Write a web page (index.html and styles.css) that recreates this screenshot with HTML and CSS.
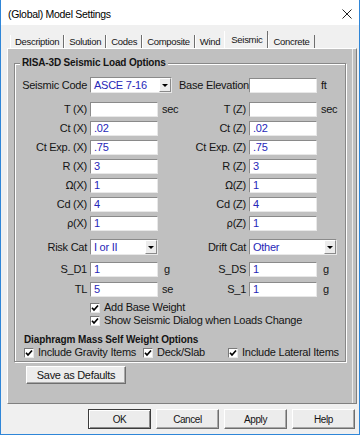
FILE: index.html
```html
<!DOCTYPE html>
<html lang="en">
<head>
    <meta charset="UTF-8">
    <title>(Global) Model Settings</title>
    <link rel="stylesheet" href="styles.css">
</head>
<body>
    <div class="window">
        <div class="titlebar">
            <span class="title">(Global) Model Settings</span>
            <svg class="close" width="10" height="10" viewBox="0 0 10 10">
                <path d="M0.5 0.5 L9.5 9.5 M9.5 0.5 L0.5 9.5" stroke="#222" stroke-width="1" fill="none"/>
            </svg>
        </div>

        <!-- tabs -->
        <div class="tabs">
            <span class="tab">Description</span>
            <span class="tab">Solution</span>
            <span class="tab">Codes</span>
            <span class="tab">Composite</span>
            <span class="tab">Wind</span>
            <span class="tab active">Seismic</span>
            <span class="tab">Concrete</span>
        </div>

        <div class="panel">
            <div class="group">
                <span class="group-title">RISA-3D Seismic Load Options</span>

                <div class="row row-code">
                    <span class="lbl">Seismic Code</span>
                    <div class="combo combo-code"><span class="val">ASCE 7-16</span><span class="arrow"></span></div>
                    <span class="lbl lbl-r">Base Elevation</span>
                    <div class="field"></div>
                    <span class="unit">ft</span>
                </div>

                <div class="row row-first">
                    <span class="lbl">T (X)</span>
                    <div class="field"></div>
                    <span class="unit">sec</span>
                    <span class="lbl">T (Z)</span>
                    <div class="field"></div>
                    <span class="unit">sec</span>
                </div>
                <div class="row">
                    <span class="lbl">Ct (X)</span>
                    <div class="field">.02</div>
                    <span class="unit"></span>
                    <span class="lbl">Ct (Z)</span>
                    <div class="field">.02</div>
                </div>
                <div class="row">
                    <span class="lbl">Ct Exp. (X)</span>
                    <div class="field">.75</div>
                    <span class="unit"></span>
                    <span class="lbl">Ct Exp. (Z)</span>
                    <div class="field">.75</div>
                </div>
                <div class="row">
                    <span class="lbl">R (X)</span>
                    <div class="field">3</div>
                    <span class="unit"></span>
                    <span class="lbl">R (Z)</span>
                    <div class="field">3</div>
                </div>
                <div class="row">
                    <span class="lbl"><span class="sym">Ω</span>(X)</span>
                    <div class="field">1</div>
                    <span class="unit"></span>
                    <span class="lbl"><span class="sym">Ω</span>(Z)</span>
                    <div class="field">1</div>
                </div>
                <div class="row">
                    <span class="lbl">Cd (X)</span>
                    <div class="field">4</div>
                    <span class="unit"></span>
                    <span class="lbl">Cd (Z)</span>
                    <div class="field">4</div>
                </div>
                <div class="row">
                    <span class="lbl"><span class="sym">ρ</span>(X)</span>
                    <div class="field">1</div>
                    <span class="unit"></span>
                    <span class="lbl"><span class="sym">ρ</span>(Z)</span>
                    <div class="field">1</div>
                </div>

                <div class="row row-cat">
                    <span class="lbl">Risk Cat</span>
                    <div class="combo"><span class="val">I or II</span><span class="arrow"></span></div>
                    <span class="unit"></span>
                    <span class="lbl">Drift Cat</span>
                    <div class="combo combo-drift"><span class="val">Other</span><span class="arrow"></span></div>
                </div>

                <div class="row row-sd1">
                    <span class="lbl">S_D1</span>
                    <div class="field">1</div>
                    <span class="unit unit-g">g</span>
                    <span class="lbl">S_DS</span>
                    <div class="field">1</div>
                    <span class="unit unit-g">g</span>
                </div>
                <div class="row row-tl">
                    <span class="lbl">TL</span>
                    <div class="field">5</div>
                    <span class="unit">se</span>
                    <span class="lbl">S_1</span>
                    <div class="field">1</div>
                    <span class="unit unit-g">g</span>
                </div>

                <div class="row row-check row-base">
                    <label class="check">
                        <span class="box"><svg width="8" height="8" viewBox="0 0 8 8"><path d="M1 3.8 L3 6 L7 1.5" stroke="#000" stroke-width="1.7" fill="none"/></svg></span>
                        Add Base Weight
                    </label>
                </div>
                <div class="row row-check row-show">
                    <label class="check">
                        <span class="box"><svg width="8" height="8" viewBox="0 0 8 8"><path d="M1 3.8 L3 6 L7 1.5" stroke="#000" stroke-width="1.7" fill="none"/></svg></span>
                        Show Seismic Dialog when Loads Change
                    </label>
                </div>

                <div class="sub-title">Diaphragm Mass Self Weight Options</div>
                <div class="mass-row">
                    <label class="check">
                        <span class="box"><svg width="8" height="8" viewBox="0 0 8 8"><path d="M1 3.8 L3 6 L7 1.5" stroke="#000" stroke-width="1.7" fill="none"/></svg></span>
                        Include Gravity Items
                    </label>
                    <label class="check">
                        <span class="box"><svg width="8" height="8" viewBox="0 0 8 8"><path d="M1 3.8 L3 6 L7 1.5" stroke="#000" stroke-width="1.7" fill="none"/></svg></span>
                        Deck/Slab
                    </label>
                    <label class="check">
                        <span class="box"><svg width="8" height="8" viewBox="0 0 8 8"><path d="M1 3.8 L3 6 L7 1.5" stroke="#000" stroke-width="1.7" fill="none"/></svg></span>
                        Include Lateral Items
                    </label>
                </div>
            </div>

            <button class="btn btn-save">Save as Defaults</button>
        </div>

        <div class="actions">
            <button class="btn btn-dlg btn-default">OK</button>
            <button class="btn btn-dlg">Cancel</button>
            <button class="btn btn-dlg">Apply</button>
            <button class="btn btn-dlg">Help</button>
        </div>
    </div>
</body>
</html>
```

FILE: styles.css
```css
/* reset */
* {
    margin: 0;
    padding: 0;
    box-sizing: border-box;
}

body {
    font-family: "Liberation Sans", Arial, sans-serif;
    font-size: 11px;
    color: #141414;
    background: #fff;
}

/* window frame */
.window {
    width: 360px;
    height: 435px;
    background: #f0f0f0;
    border: 1px solid #2f86d8;
    border-top: none;
}

.titlebar {
    height: 25px;
    background: #fff;
    display: flex;
    align-items: center;
    justify-content: space-between;
    padding: 2px 7px 0 7px;
}

.title {
    font-size: 10.5px;
    letter-spacing: -0.3px;
    color: #000;
}

/* tabs */
.tabs {
    display: flex;
    align-items: flex-end;
    height: 23px;
    padding-left: 9px;
}

.tab {
    height: 13px;
    line-height: 13px;
    padding: 0 4px;
    font-size: 9.5px;
    letter-spacing: -0.3px;
    border-left: 1px solid #fff;
    border-right: 1px solid #6e6e6e;
}

.tab.active {
    height: 17px;
    padding: 2px 5px 2px 6px;
    margin-left: -1px;
}

/* tab page */
.panel {
    width: 350px;
    height: 356px;
    margin-left: 6px;
    background: #c0c0c0;
    border: 1px solid;
    border-color: #fff #808080 #808080 #fff;
    box-shadow: inset -3px 0 0 #c0c0c0, inset -4px 0 0 #ececec;
}

.group {
    position: relative;
    height: 299px;
    margin: 14px 10px 0 6px;
    border: 1px solid #888;
    box-shadow: inset 1px 1px 0 #fff, 1px 1px 0 #fff;
}

.group-title {
    position: absolute;
    top: -8px;
    left: 5px;
    padding: 0 2px;
    background: #c0c0c0;
    font-size: 10px;
    font-weight: bold;
    letter-spacing: -0.15px;
    line-height: 13px;
}

.row {
    display: grid;
    grid-template-columns: 72px 68px 15px 67px 68px 1fr;
    column-gap: 3px;
    align-items: center;
    height: 15px;
    margin-top: 4px;
    letter-spacing: -0.25px;
}

.row-code {
    height: 16px;
    margin-top: 13px;
}

.row-first {
    margin-top: 9px;
}

.row-cat {
    height: 16px;
    margin-top: 8px;
}

.row-sd1 {
    margin-top: 7px;
}

.row-tl {
    margin-top: 5px;
}

.row-check {
    height: 11px;
}

.row-base {
    margin-top: 5px;
}

.row-show {
    margin-top: 2px;
}

.row-check .check {
    grid-column: 2 / -1;
}

.lbl {
    text-align: right;
    white-space: nowrap;
    line-height: 15px;
}

.sym {
    font-family: "DejaVu Sans", sans-serif;
    font-size: 10px;
}

.unit {
    padding-left: 1px;
    line-height: 15px;
}

.unit-g {
    padding-left: 3px;
}

/* edit boxes */
.field {
    height: 15px;
    background: #fff;
    border: 1px solid;
    border-color: #8a8a8a #e8e8e8 #e8e8e8 #8a8a8a;
    color: #2727b8;
    padding-left: 3px;
    line-height: 13px;
}

.combo {
    display: flex;
    height: 16px;
    background: #fff;
    border: 1px solid;
    border-color: #8a8a8a #e8e8e8 #e8e8e8 #8a8a8a;
    color: #2727b8;
    line-height: 14px;
}

.combo-code {
    grid-column: 2 / 4;
    width: 82px;
}

.combo-drift {
    grid-column: 5 / 7;
    width: 88px;
}

.combo .val {
    flex: 1;
    padding-left: 3px;
    white-space: nowrap;
}

.combo .arrow {
    width: 12px;
    display: flex;
    align-items: center;
    justify-content: center;
    background: #ececec;
    border: 1px solid;
    border-color: #fff #8a8a8a #8a8a8a #fff;
}

.combo .arrow::after {
    content: "";
    border-left: 3px solid transparent;
    border-right: 3px solid transparent;
    border-top: 3px solid #000;
}

/* checkboxes */
.check {
    display: flex;
    align-items: center;
    gap: 4px;
    white-space: nowrap;
    line-height: 11px;
}

.box {
    width: 10px;
    height: 10px;
    flex: none;
    display: flex;
    align-items: center;
    justify-content: center;
    background: #fff;
    border: 1px solid;
    border-color: #7a7a7a #e8e8e8 #e8e8e8 #7a7a7a;
}

.sub-title {
    margin-top: 8px;
    padding-left: 9px;
    height: 12px;
    line-height: 12px;
    font-size: 10px;
    font-weight: bold;
    letter-spacing: -0.1px;
}

.mass-row {
    display: grid;
    grid-template-columns: 119px 85px 1fr;
    margin-top: 1px;
    padding-left: 9px;
    height: 11px;
    letter-spacing: -0.25px;
}

/* buttons */
.btn {
    font-family: "Liberation Sans", Arial, sans-serif;
    color: #141414;
    background: #ececec;
    border: 1px solid;
    border-color: #fff #6e6e6e #6e6e6e #fff;
    box-shadow: inset -1px -1px 0 #a8a8a8;
}

.btn-save {
    display: block;
    width: 100px;
    height: 18px;
    margin: 4px 0 0 18px;
    font-size: 11px;
    letter-spacing: -0.3px;
}

.actions {
    display: flex;
    justify-content: flex-end;
    gap: 5px;
    margin-top: 5px;
    padding-right: 4px;
}

.btn-dlg {
    width: 63px;
    height: 20px;
    font-size: 10px;
    letter-spacing: -0.4px;
}

.btn-default {
    border-color: #3c3c3c;
    box-shadow: inset 1px 1px 0 #fff, inset -1px -1px 0 #8a8a8a;
}
```
